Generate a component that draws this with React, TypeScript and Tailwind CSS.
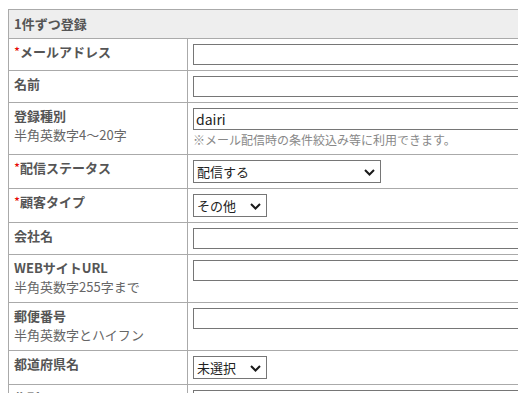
import React from "react";

const font = { fontFamily: '"Noto Sans CJK JP", "Noto Sans", sans-serif' };

function Chevron() {
  return (
    <svg width="11" height="7" viewBox="0 0 11 7" className="absolute right-[5px] top-[8px]">
      <path d="M1 1 L5.5 5.5 L10 1" fill="none" stroke="#1a1a1a" strokeWidth="2" />
    </svg>
  );
}

function Select({ value, w }: { value: string; w: string }) {
  return (
    <div className={`relative h-[23px] ${w} border border-[#767676] bg-white text-[13px] leading-[21px] text-[#222] pl-[3px]`}>
      {value}
      <Chevron />
    </div>
  );
}

function Input({ value = "" }: { value?: string }) {
  return (
    <div className="h-[21px] w-[420px] border border-[#767676] bg-white text-[13px] leading-[19px] text-[#222] pl-[2px]">
      {value}
    </div>
  );
}

function Label({ text, req, sub }: { text: string; req?: boolean; sub?: string }) {
  return (
    <td className="align-top border border-[#aaaaaa] pl-[5px] pt-[3px] pb-[6px] text-[13px] leading-[19px] text-[#555]">
      <div className="font-bold">
        {req && <span className="text-[#e60000] font-normal">*</span>}
        {text}
      </div>
      {sub && <div className="font-normal text-[#666]">{sub}</div>}
    </td>
  );
}

function Cell({ children }: { children: React.ReactNode }) {
  return <td className="align-top border border-[#aaaaaa] pl-[5px] pt-[5px] pb-[5px]">{children}</td>;
}

export default function App() {
  return (
    <div className="w-[518px] h-[393px] overflow-hidden bg-white" style={font}>
      <div className="pt-[9px] pl-[8px]">
        <table className="border-collapse table-fixed w-[720px]">
          <colgroup>
            <col className="w-[179px]" />
            <col />
          </colgroup>
          <tbody>
            <tr>
              <td colSpan={2} className="border border-[#aaaaaa] bg-[#eeeeee] pl-[5px] pt-[4px] pb-[5px] text-[13px] leading-[19px] font-bold text-[#555]">
                1件ずつ登録
              </td>
            </tr>
            <tr>
              <Label text="メールアドレス" req />
              <Cell><Input /></Cell>
            </tr>
            <tr>
              <Label text="名前" />
              <Cell><Input /></Cell>
            </tr>
            <tr>
              <Label text="登録種別" sub="半角英数字4〜20字" />
              <Cell>
                <div className="h-[22px] w-[420px] border border-[#767676] bg-white text-[14px] leading-[20px] text-[#222] pl-[2px]">dairi</div>
                <div className="text-[12px] leading-[18px] text-[#888] pt-[1px]">※メール配信時の条件絞込み等に利用できます。</div>
              </Cell>
            </tr>
            <tr>
              <Label text="配信ステータス" req />
              <Cell><Select value="配信する" w="w-[188px]" /></Cell>
            </tr>
            <tr>
              <Label text="顧客タイプ" req />
              <Cell><Select value="その他" w="w-[74px]" /></Cell>
            </tr>
            <tr>
              <Label text="会社名" />
              <Cell><Input /></Cell>
            </tr>
            <tr>
              <Label text="WEBサイトURL" sub="半角英数字255字まで" />
              <Cell><Input /></Cell>
            </tr>
            <tr>
              <Label text="郵便番号" sub="半角英数字とハイフン" />
              <Cell><Input /></Cell>
            </tr>
            <tr>
              <Label text="都道府県名" />
              <Cell><Select value="未選択" w="w-[74px]" /></Cell>
            </tr>
            <tr>
              <Label text="住所" />
              <Cell><Input /></Cell>
            </tr>
          </tbody>
        </table>
      </div>
    </div>
  );
}
